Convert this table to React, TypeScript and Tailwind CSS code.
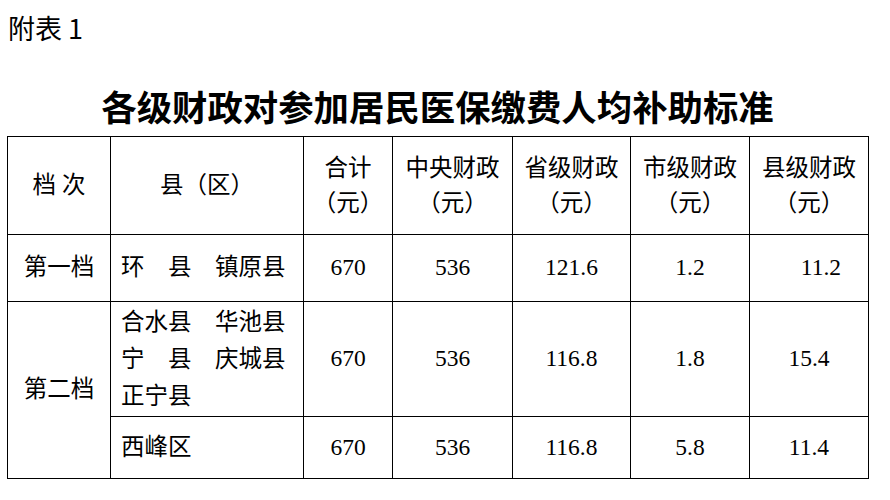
import React from 'react';

const font = { fontFamily: "'Liberation Serif', 'Noto Sans CJK SC', serif" };

const cell = 'border border-black p-0 align-middle';

function Head({ a, b }: { a: string; b?: string }) {
  return (
    <td className={`${cell} text-center leading-[35px]`}>
      <div>{a}</div>
      {b && <div>{b}</div>}
    </td>
  );
}

export default function App() {
  return (
    <div className="w-[890px] h-[500px] bg-white text-black" style={font}>
      <div className="pl-[8px] pt-[11px] text-[27px] leading-[34px]" style={{ fontFamily: "'Noto Sans CJK SC', sans-serif" }}>
        附表 1
      </div>
      <div className="ml-[7px] mt-[41px] w-[861px] text-center text-[35.4px] font-bold leading-[40px]" style={{ fontFamily: "'Noto Sans CJK SC', serif" }}>
        各级财政对参加居民医保缴费人均补助标准
      </div>
      <table className="ml-[7px] mt-[10px] w-[862px] table-fixed border-collapse text-[23.5px]">
        <colgroup>
          <col className="w-[103px]" />
          <col className="w-[193px]" />
          <col className="w-[89px]" />
          <col className="w-[120px]" />
          <col className="w-[118px]" />
          <col className="w-[119px]" />
          <col className="w-[119px]" />
        </colgroup>
        <tbody>
          <tr className="h-[98px]">
            <Head a="档 次" />
            <Head a="县（区）" />
            <Head a="合计" b="（元）" />
            <Head a="中央财政" b="（元）" />
            <Head a="省级财政" b="（元）" />
            <Head a="市级财政" b="（元）" />
            <Head a="县级财政" b="（元）" />
          </tr>
          <tr className="h-[67px]">
            <td className={`${cell} text-center`}>第一档</td>
            <td className={`${cell} pl-[10px]`}>环　县　镇原县</td>
            <td className={`${cell} text-center`}>670</td>
            <td className={`${cell} text-center`}>536</td>
            <td className={`${cell} text-center`}>121.6</td>
            <td className={`${cell} text-center`}>1.2</td>
            <td className={`${cell} pl-[24px] text-center`}>11.2</td>
          </tr>
          <tr className="h-[115px]">
            <td rowSpan={2} className={`${cell} text-center`}>第二档</td>
            <td className={`${cell} pl-[10px] leading-[37px]`}>
              <div>合水县　华池县</div>
              <div>宁　县　庆城县</div>
              <div>正宁县</div>
            </td>
            <td className={`${cell} text-center`}>670</td>
            <td className={`${cell} text-center`}>536</td>
            <td className={`${cell} text-center`}>116.8</td>
            <td className={`${cell} text-center`}>1.8</td>
            <td className={`${cell} text-center`}>15.4</td>
          </tr>
          <tr className="h-[62px]">
            <td className={`${cell} pl-[10px]`}>西峰区</td>
            <td className={`${cell} text-center`}>670</td>
            <td className={`${cell} text-center`}>536</td>
            <td className={`${cell} text-center`}>116.8</td>
            <td className={`${cell} text-center`}>5.8</td>
            <td className={`${cell} text-center`}>11.4</td>
          </tr>
        </tbody>
      </table>
    </div>
  );
}
